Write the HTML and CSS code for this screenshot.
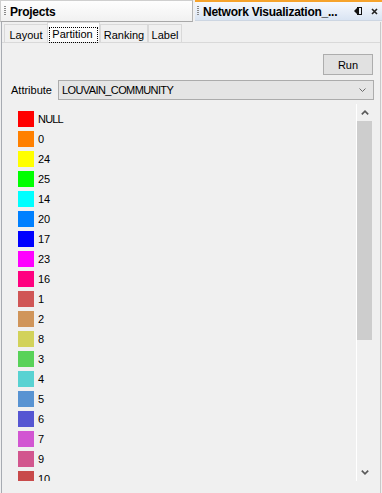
FILE: index.html
```html
<!DOCTYPE html>
<html>
<head>
<meta charset="utf-8">
<link rel="stylesheet" href="styles.css">
</head>
<body>
<div class="app">
  <div class="header">
    <div class="hdr-projects">
      <span class="grip"></span>
      <span class="hdr-title">Projects</span>
    </div>
    <div class="hdr-network">
      <span class="grip"></span>
      <span class="hdr-title">Network Visualization_...</span>
      <span class="hdr-icons">
        <svg class="ico-min" width="8" height="8" viewBox="0 0 8 8">
          <path d="M0 4 L3 1 L3 7 Z" fill="#111"/>
          <rect x="3.5" y="0.5" width="4" height="7" fill="none" stroke="#111"/>
          <rect x="3" y="0" width="2" height="8" fill="#111"/>
        </svg>
        <svg class="ico-close" width="7" height="7" viewBox="0 0 7 7">
          <path d="M1 1 L6 6 M6 1 L1 6" stroke="#222" stroke-width="1.6"/>
        </svg>
      </span>
    </div>
  </div>
  <div class="main">
    <div class="tabs">
      <div class="tab tab-layout">Layout</div>
      <div class="tab selected tab-partition"><span class="focus">Partition</span></div>
      <div class="tab tab-ranking">Ranking</div>
      <div class="tab tab-label">Label</div>
    </div>
    <div class="panel">
      <div class="run-row"><div class="btn">Run</div></div>
      <div class="attr-row">
        <span class="attr-label">Attribute</span>
        <div class="combo">
          <span class="combo-text">LOUVAIN_COMMUNITY</span>
          <svg class="chev" width="7" height="4" viewBox="0 0 7 4">
            <path d="M0.5 0.5 L3.5 3.5 L6.5 0.5" fill="none" stroke="#6a6a6a"/>
          </svg>
        </div>
      </div>
      <div class="list">
        <div class="items">
          <div class="item"><span class="sw" style="background:#ff0000"></span><span class="lbl caps">NULL</span></div>
          <div class="item"><span class="sw" style="background:#ff8000"></span><span class="lbl">0</span></div>
          <div class="item"><span class="sw" style="background:#ffff00"></span><span class="lbl">24</span></div>
          <div class="item"><span class="sw" style="background:#00ff00"></span><span class="lbl">25</span></div>
          <div class="item"><span class="sw" style="background:#00ffff"></span><span class="lbl">14</span></div>
          <div class="item"><span class="sw" style="background:#0080ff"></span><span class="lbl">20</span></div>
          <div class="item"><span class="sw" style="background:#0000ff"></span><span class="lbl">17</span></div>
          <div class="item"><span class="sw" style="background:#ff00ff"></span><span class="lbl">23</span></div>
          <div class="item"><span class="sw" style="background:#ff0080"></span><span class="lbl">16</span></div>
          <div class="item"><span class="sw" style="background:#d05656"></span><span class="lbl">1</span></div>
          <div class="item"><span class="sw" style="background:#d0955a"></span><span class="lbl">2</span></div>
          <div class="item"><span class="sw" style="background:#d2d25a"></span><span class="lbl">8</span></div>
          <div class="item"><span class="sw" style="background:#58d258"></span><span class="lbl">3</span></div>
          <div class="item"><span class="sw" style="background:#58d2d2"></span><span class="lbl">4</span></div>
          <div class="item"><span class="sw" style="background:#5893d2"></span><span class="lbl">5</span></div>
          <div class="item"><span class="sw" style="background:#5656d2"></span><span class="lbl">6</span></div>
          <div class="item"><span class="sw" style="background:#d256d2"></span><span class="lbl">7</span></div>
          <div class="item"><span class="sw" style="background:#d2568e"></span><span class="lbl">9</span></div>
          <div class="item"><span class="sw" style="background:#c84a4a"></span><span class="lbl">10</span></div>
        </div>
        <div class="scrollbar">
          <div class="sb-btn">
            <svg width="8" height="5" viewBox="0 0 8 5"><path d="M0.8 4.3 L4 1.2 L7.2 4.3" fill="none" stroke="#5a5a5a" stroke-width="1.7"/></svg>
          </div>
          <div class="sb-track"><div class="sb-thumb"></div></div>
          <div class="sb-btn">
            <svg width="8" height="5" viewBox="0 0 8 5"><path d="M0.8 0.7 L4 3.8 L7.2 0.7" fill="none" stroke="#5a5a5a" stroke-width="1.7"/></svg>
          </div>
        </div>
      </div>
    </div>
  </div>
</div>
</body>
</html>
```

FILE: styles.css
```css
html, body {
  margin: 0;
  padding: 0;
}
body {
  background: #f0f0f0;
  font-family: "Liberation Sans", Arial, sans-serif;
  font-size: 11px;
  color: #000;
}
.app {
  width: 382px;
  height: 493px;
  overflow: hidden;
  display: flex;
  flex-direction: column;
}

/* header */
.header {
  display: flex;
  height: 22px;
  flex: none;
}
.hdr-projects {
  box-sizing: border-box;
  width: 193px;
  height: 22px;
  border: 1px solid #cfcfcf;
  border-bottom-color: #a8a8a8;
  border-right-color: #b4b4b4;
  background: linear-gradient(#fefefe, #f1f1f1);
  display: flex;
  align-items: center;
  padding-left: 3px;
}
.hdr-network {
  box-sizing: border-box;
  flex: 1;
  margin-left: 2px;
  height: 21px;
  border-top: 2px solid #f6a32c;
  border-bottom: 1px solid #cdd6e2;
  background: linear-gradient(#f7f9fd, #d9e4f3);
  display: flex;
  align-items: center;
  padding-left: 2px;
}
.grip {
  width: 2px;
  height: 10px;
  background: repeating-linear-gradient(to bottom, #8a8a8a 0 1px, transparent 1px 2px);
  margin-right: 4px;
  flex: none;
}
.hdr-title {
  font-weight: bold;
  font-size: 12px;
  letter-spacing: -0.25px;
  color: #000;
  padding-top: 1px;
}
.hdr-icons {
  margin-left: auto;
  display: flex;
  align-items: center;
  gap: 9px;
  padding-right: 4px;
}
.ico-min,
.ico-close {
  display: block;
}

/* main area */
.main {
  flex: 1;
  margin-left: 1px;
  border-left: 1px solid #a7abb2;
  border-right: 1px solid #c8c8c8;
  width: 378px;
  display: flex;
  flex-direction: column;
}
.tabs {
  display: flex;
  align-items: flex-end;
  height: 20px;
  margin-left: 2px;
  flex: none;
}
.tab {
  box-sizing: border-box;
  height: 18px;
  border: 1px solid #d9d9d9;
  border-bottom: none;
  background: #f0f0f0;
  display: flex;
  align-items: center;
  justify-content: center;
  padding-top: 2px;
}
.tab-layout {
  width: 44px;
  margin-right: -1px;
}
.tab-partition {
  width: 53px;
}
.tab-ranking {
  width: 48px;
}
.tab-label {
  width: 34px;
}
.tab.selected {
  height: 20px;
  background: #fcfcfc;
  align-items: flex-start;
  padding-top: 4px;
  position: relative;
  z-index: 1;
}
.focus {
  border: 1px dotted #000;
  padding: 0 4px 1px 2px;
  line-height: 13px;
}

.panel {
  flex: 1;
  border-top: 1px solid #d9d9d9;
  padding: 11px 6px 0 9px;
  display: flex;
  flex-direction: column;
}
.run-row {
  display: flex;
  justify-content: flex-end;
  padding-right: 1px;
}
.btn {
  box-sizing: border-box;
  width: 50px;
  height: 21px;
  border: 1px solid #adadad;
  background: #e1e1e1;
  display: flex;
  align-items: center;
  justify-content: center;
}
.attr-row {
  display: flex;
  align-items: center;
  margin-top: 5px;
  height: 20px;
}
.attr-label {
  width: 47px;
  flex: none;
}
.combo {
  box-sizing: border-box;
  flex: 1;
  height: 20px;
  border: 1px solid #acacac;
  background: #e5e5e5;
  display: flex;
  align-items: center;
  padding: 0 7px 0 3px;
}
.combo-text {
  letter-spacing: -0.6px;
}
.chev {
  margin-left: auto;
  display: block;
}

.list {
  margin-top: 4px;
  height: 377px;
  display: flex;
  margin-right: 2px;
  flex: none;
}
.items {
  flex: 1;
  overflow: hidden;
  padding: 5px 0 0 7px;
}
.item {
  height: 20px;
  display: flex;
  align-items: center;
}
.sw {
  width: 16px;
  height: 16px;
  flex: none;
  margin-right: 4px;
}
.lbl.caps {
  letter-spacing: -0.8px;
}
.scrollbar {
  width: 15px;
  border-left: 1px solid #ffffff;
  display: flex;
  flex-direction: column;
  background: #f0f0f0;
}
.sb-btn {
  height: 17px;
  display: flex;
  align-items: center;
  justify-content: center;
  flex: none;
}
.sb-track {
  flex: 1;
  display: flex;
  flex-direction: column;
}
.sb-thumb {
  height: 219px;
  background: #cdcdcd;
}
```
